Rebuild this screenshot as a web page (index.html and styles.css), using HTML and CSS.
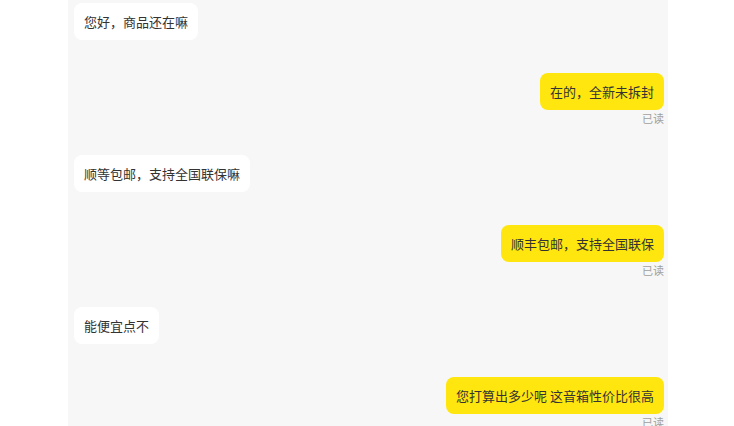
FILE: index.html
```html
<!DOCTYPE html>
<html lang="zh-CN">
<head>
    <meta charset="UTF-8">
    <meta name="viewport" content="width=device-width, initial-scale=1.0">
    <title>聊天</title>
    <link rel="stylesheet" href="styles.css">
</head>
<body>
    <div class="chat-panel">
        <!-- 买家消息 -->
        <div class="msg msg-left">
            <div class="bubble">您好，商品还在嘛</div>
        </div>
        <!-- 卖家消息 -->
        <div class="msg msg-right">
            <div class="bubble">在的，全新未拆封</div>
            <div class="read">已读</div>
        </div>

        <div class="msg msg-left">
            <div class="bubble">顺等包邮，支持全国联保嘛</div>
        </div>
        <div class="msg msg-right">
            <div class="bubble">顺丰包邮，支持全国联保</div>
            <div class="read">已读</div>
        </div>

        <div class="msg msg-left">
            <div class="bubble">能便宜点不</div>
        </div>
        <div class="msg msg-right">
            <div class="bubble">您打算出多少呢 这音箱性价比很高</div>
            <div class="read">已读</div>
        </div>
    </div>
</body>
</html>
```

FILE: styles.css
```css
/* 页面基础 */
html, body {
    margin: 0;
    height: 100%;
    overflow: hidden;
    background-color: #fff;
    font-family: "Noto Sans CJK SC", "Noto Sans", sans-serif;
}

/* 聊天面板 */
.chat-panel {
    width: 600px;
    min-height: 100%;
    margin: 0 0 0 68px;
    padding: 3px 4px 0 6px;
    box-sizing: border-box;
    background-color: #f7f7f7;
}

.msg {
    display: flex;
    flex-direction: column;
}

.msg-left {
    align-items: flex-start;
    margin-bottom: 33px;
}

.msg-right {
    align-items: flex-end;
    margin-bottom: 29px;
}

/* 气泡 */
.bubble {
    padding: 9px 10px 9px 10px;
    font-size: 13px;
    line-height: 19px;
    color: #333;
    border-radius: 8px;
    white-space: nowrap;
}

.msg-left .bubble {
    background-color: #fff;
}

.msg-right .bubble {
    background-color: #ffe60f;
}

.read {
    font-size: 11px;
    line-height: 15px;
    margin-top: 1px;
    color: #a0a0a0;
}
```
